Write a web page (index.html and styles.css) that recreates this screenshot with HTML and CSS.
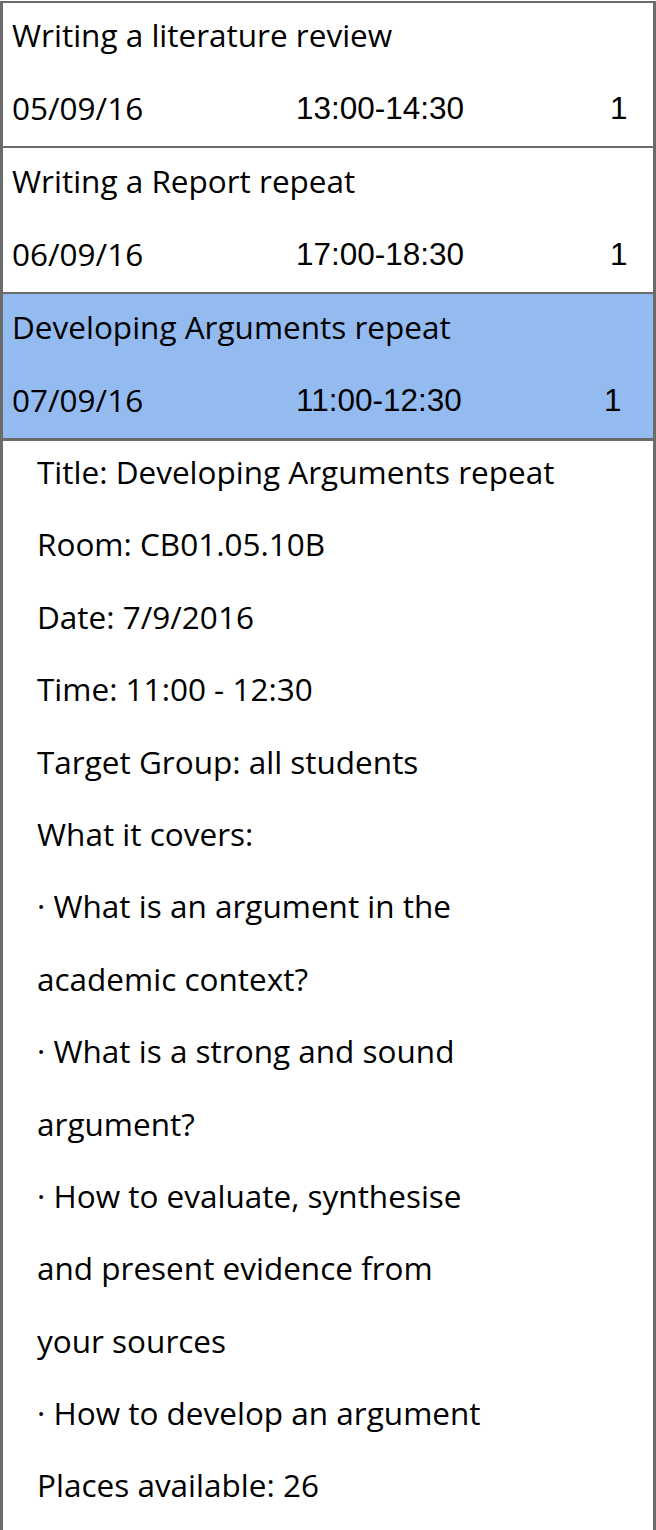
FILE: index.html
```html
<!DOCTYPE html>
<html lang="en">
<head>
<meta charset="utf-8">
<title>Workshops</title>
<link rel="stylesheet" href="styles.css">
</head>
<body>
<div class="list">
  <div class="row row--first">
    <div class="title">Writing a literature review</div>
    <div class="meta"><span class="date">05/09/16</span><span class="time">13:00-14:30</span><span class="count">1</span></div>
  </div>
  <div class="row">
    <div class="title">Writing a Report repeat</div>
    <div class="meta"><span class="date">06/09/16</span><span class="time">17:00-18:30</span><span class="count">1</span></div>
  </div>
  <div class="row row--selected">
    <div class="title">Developing Arguments repeat</div>
    <div class="meta"><span class="date">07/09/16</span><span class="time">11:00-12:30</span><span class="count">1</span></div>
  </div>
  <div class="detail">
    <p>Title: Developing Arguments repeat</p>
    <p>Room: CB01.05.10B</p>
    <p>Date: 7/9/2016</p>
    <p>Time: 11:00 - 12:30</p>
    <p>Target Group: all students</p>
    <p>What it covers:</p>
    <p>· What is an argument in the</p>
    <p>academic context?</p>
    <p>· What is a strong and sound</p>
    <p>argument?</p>
    <p>· How to evaluate, synthesise</p>
    <p>and present evidence from</p>
    <p>your sources</p>
    <p>· How to develop an argument</p>
    <p>Places available: 26</p>
  </div>
</div>
</body>
</html>
```
FILE: styles.css
```css
html, body {
  margin: 0;
  padding: 0;
  background: #fff;
}

body {
  font-family: "Open Sans", "DejaVu Sans", sans-serif;
  font-size: 31.5px;
  color: #000;
}

.list {
  box-sizing: border-box;
  width: 656px;
  margin-top: 1px;
  border-style: solid;
  border-color: #6b6b6b;
  border-width: 2px 3px 3px 3px;
  background: #fff;
}

.row {
  padding-left: 9px;
  border-bottom: 2px solid #6b6b6b;
}

.row--selected {
  background: #94bbf0;
  border-bottom-width: 3px;
}

.title {
  line-height: 65px;
  white-space: nowrap;
}

.row--first .title {
  line-height: 64px;
}

.meta {
  display: grid;
  grid-template-columns: 284px 314px auto;
  line-height: 75px;
  padding-top: 3px;
}

.row--selected .meta {
  grid-template-columns: 284px 308px auto;
}

.time,
.count {
  font-family: "Liberation Sans", Arial, sans-serif;
  font-size: 31.5px;
  padding-top: 1px;
}

.detail {
  padding: 0 0 3px 34px;
}

.detail p {
  margin: 0;
  line-height: 62px;
  padding-bottom: 10.4px;
  white-space: nowrap;
}
```
